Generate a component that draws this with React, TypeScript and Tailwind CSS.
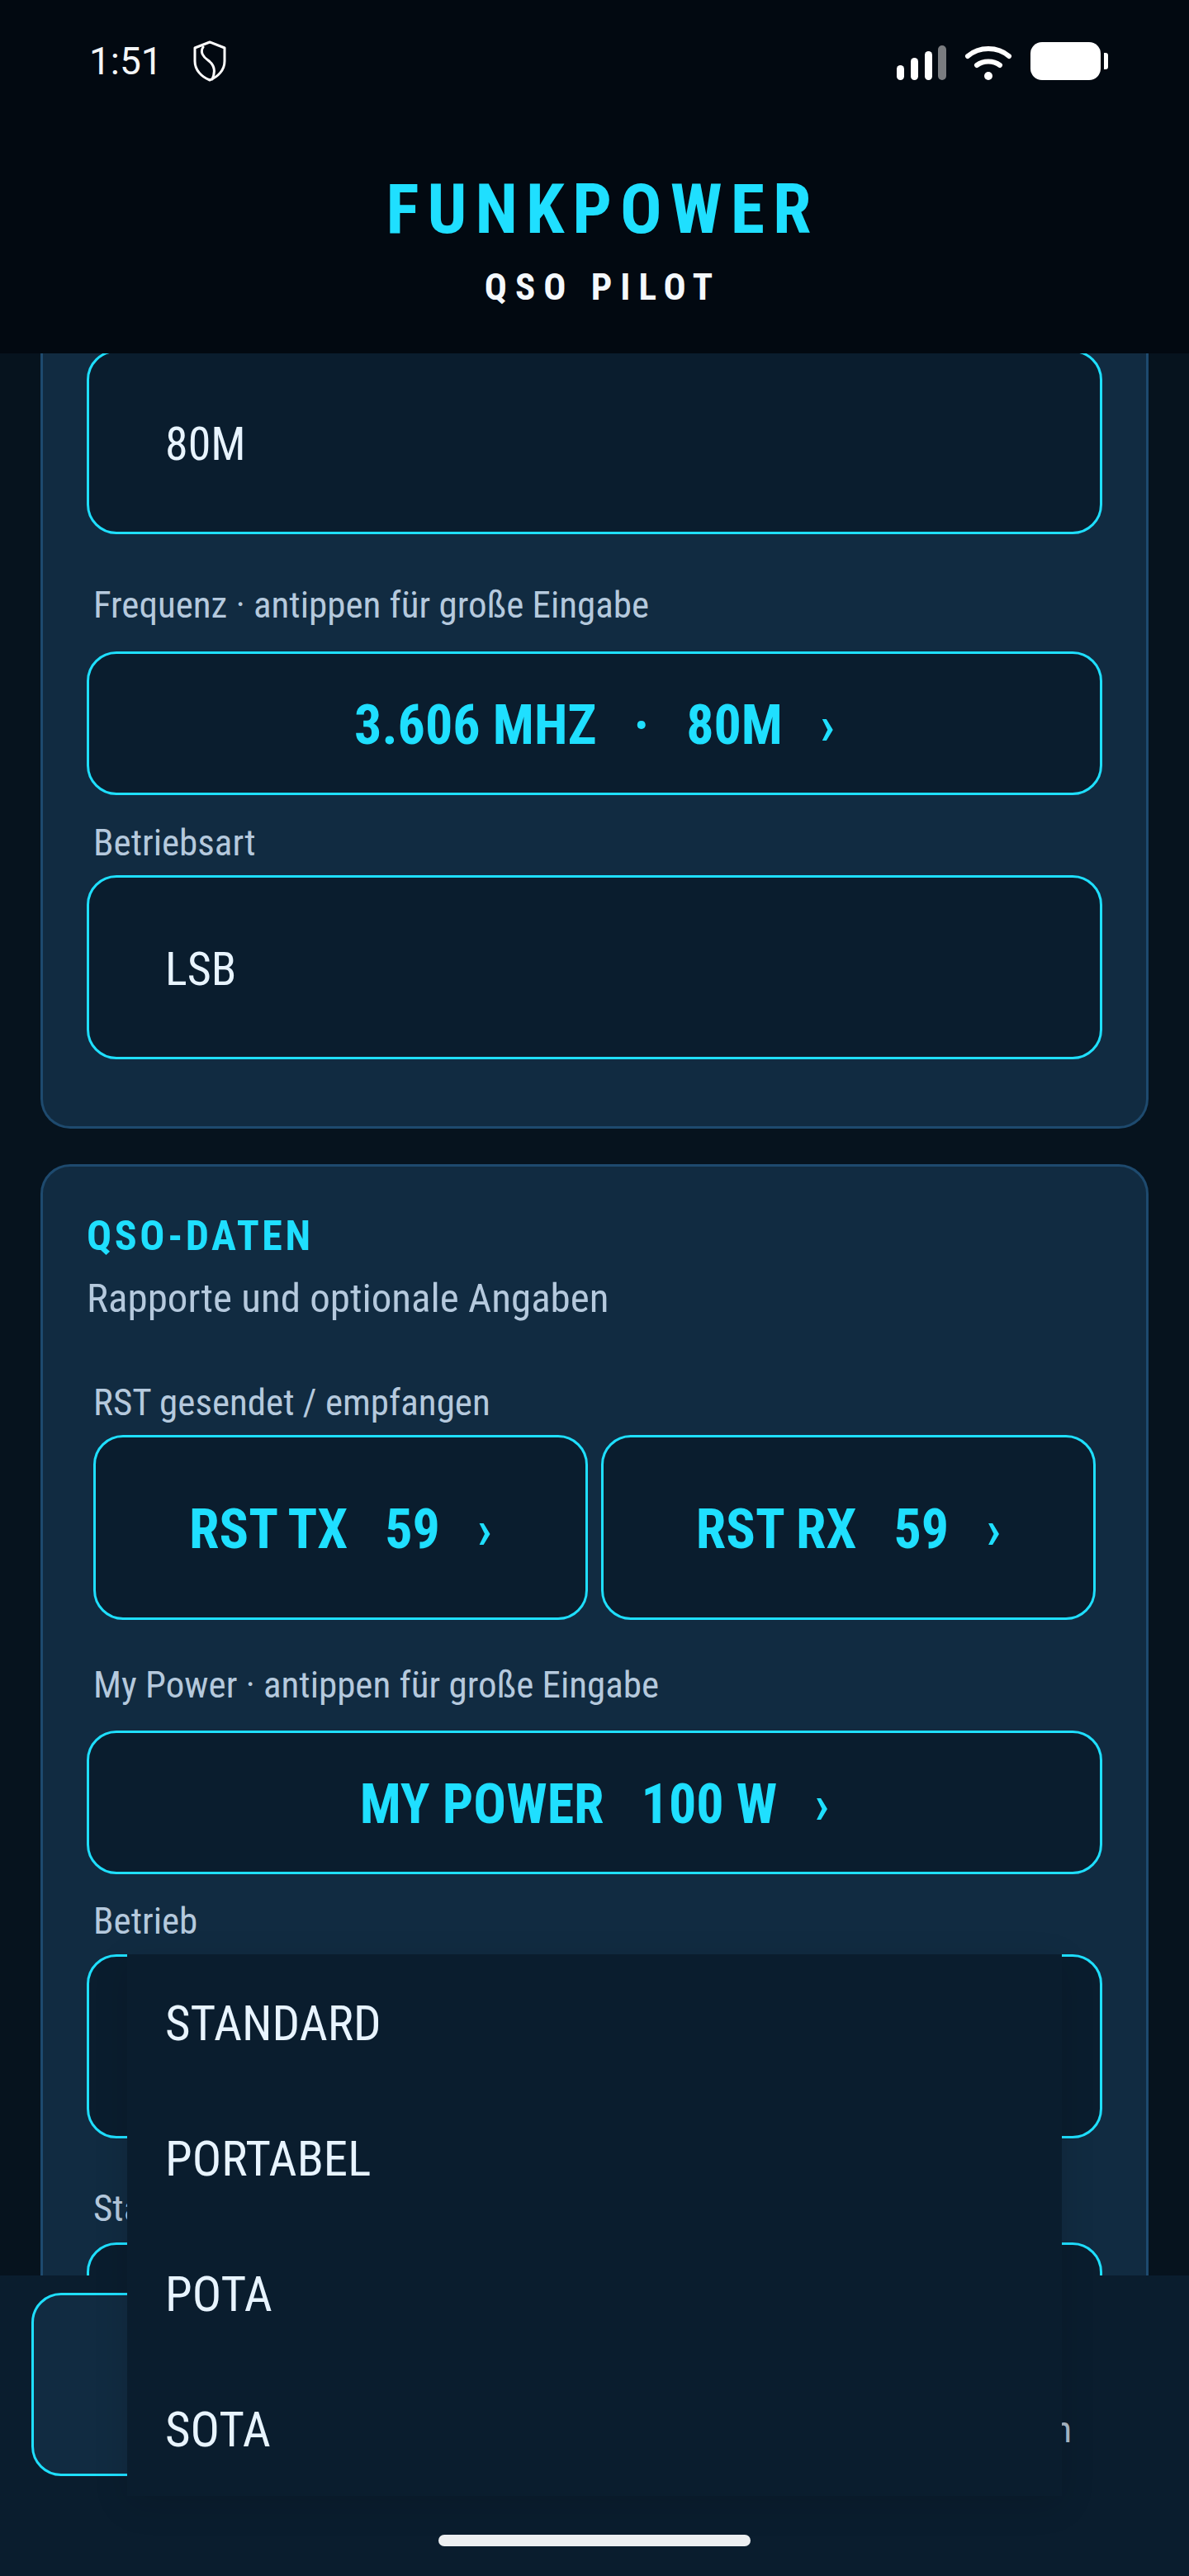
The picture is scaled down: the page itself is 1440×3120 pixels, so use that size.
function ShieldIcon() {
  return (
    <svg width="42" height="50" viewBox="0 0 42 50" fill="none" stroke="#fff" strokeWidth="3" aria-hidden="true">
      <path d="M21 2 L39 9 V25 C39 36 31 44 21 48 C11 44 3 36 3 25 V9 Z" strokeLinejoin="round" />
      <path d="M13 8 C9 14 13 20 19 24 C26 29 29 36 24 47" strokeLinecap="round" />
    </svg>
  )
}

function SignalIcon() {
  return (
    <svg width="60" height="42" viewBox="0 0 60 42" aria-hidden="true">
      <rect x="0" y="24" width="9" height="18" rx="4.5" fill="#fff" />
      <rect x="17" y="15" width="9" height="27" rx="4.5" fill="#fff" />
      <rect x="34" y="7" width="9" height="35" rx="4.5" fill="#fff" />
      <rect x="50" y="0" width="10" height="42" rx="5" fill="#7a7c80" />
    </svg>
  )
}

function WifiIcon() {
  return (
    <svg width="58" height="42" viewBox="0 0 58 42" fill="none" stroke="#fff" strokeWidth="6" strokeLinecap="round" aria-hidden="true">
      <path d="M4 13 C18 1 40 1 54 13" />
      <path d="M15 24 C23 18 35 18 43 24" />
      <circle cx="29" cy="37" r="5" fill="#fff" stroke="none" />
    </svg>
  )
}

function BatteryIcon() {
  return (
    <div className="flex items-center gap-[4px]">
      <div className="h-[46px] w-[85px] rounded-[14px] bg-white" />
      <div className="h-[20px] w-[5px] rounded-r-[3px] bg-white" />
    </div>
  )
}

function StatusBar() {
  return (
    <div className="flex h-[49px] items-center justify-between pl-[108px] pr-[98px]">
      <div className="flex items-center gap-[36px]">
        <span className="text-[46px] leading-none text-[#f4f6f8]">1:51</span>
        <ShieldIcon />
      </div>
      <div className="flex items-end gap-[22px]">
        <SignalIcon />
        <WifiIcon />
        <BatteryIcon />
      </div>
    </div>
  )
}

function FieldLabel({ text, className }: { text: string; className: string }) {
  return (
    <div className={`pl-[8px] text-[45px] leading-[60px] text-[#b5c9dd] font-stretch-condensed ${className}`}>
      {text}
    </div>
  )
}

function SelectBox({ value, className = '' }: { value?: string; className?: string }) {
  return (
    <div className={`flex h-[223px] items-center rounded-[36px] border-[3px] border-[#1fdfff] bg-[#0a1d2e] pl-[92px] pt-[4px] text-[56px] text-[#e8f4ff] font-stretch-condensed ${className}`}>
      {value}
    </div>
  )
}

function BigButton({ parts, className = '' }: { parts: string[]; className?: string }) {
  return (
    <div className={`flex items-center justify-center gap-[45px] rounded-[36px] border-[3px] border-[#1fdfff] bg-[#0a1d2e] pt-[4px] text-[66px] font-bold text-[#1fdfff] font-stretch-condensed ${className}`}>
      {parts.map((p) => (
        <span key={p}>{p}</span>
      ))}
      <span className="text-[66px] font-medium">›</span>
    </div>
  )
}

function DropdownMenu() {
  const items = ['STANDARD', 'PORTABEL', 'POTA', 'SOTA']
  return (
    <div className="absolute left-[154px] top-[2367px] w-[1132px] bg-[#0a1d2e] shadow-[0_10px_40px_rgba(0,0,0,0.12)]">
      {items.map((item) => (
        <div key={item} className="flex h-[164px] items-center pl-[46px] pt-[4px] text-[59px] text-[#e8f4ff] font-stretch-condensed">
          {item}
        </div>
      ))}
    </div>
  )
}

export default function App() {
  return (
    <div className="relative flex h-[3120px] w-[1440px] flex-col overflow-hidden bg-[#06131e] font-['Roboto',sans-serif]">
      <header className="h-[428px] shrink-0 bg-[#020911] pt-[49px] text-center">
        <StatusBar />
        <div className="mt-[106px] pl-[20px] text-[84px] font-bold leading-[100px] tracking-[10px] text-[#1fdfff] font-stretch-condensed">
          FUNKPOWER
        </div>
        <div className="mt-[14px] pl-[20px] text-[45px] font-bold leading-[60px] tracking-[10px] text-[#f4f8fc] font-stretch-condensed">
          QSO PILOT
        </div>
      </header>

      <main className="min-h-0 flex-1 overflow-hidden px-[49px]">
        {/* first card is scrolled up under the header */}
        <section className="-mt-[44px] rounded-b-[36px] border-[3px] border-t-0 border-[#1e4a6e] bg-[#112b41] px-[53px] pb-[81px] pt-[40px]">
          <SelectBox value="80M" />
          <FieldLabel text="Frequenz · antippen für große Eingabe" className="mb-[26px] mt-[56px]" />
          <BigButton parts={['3.606 MHZ', '·', '80M']} className="h-[174px]" />
          <FieldLabel text="Betriebsart" className="mb-[9px] mt-[28px]" />
          <SelectBox value="LSB" />
        </section>

        <section className="mt-[43px] rounded-[36px] border-[3px] border-[#1e4a6e] bg-[#112b41] px-[53px] pb-[40px] pt-[52px]">
          <div className="text-[50px] font-bold leading-[64px] tracking-[3.6px] text-[#1fdfff] font-stretch-condensed">
            QSO-DATEN
          </div>
          <div className="mt-[12px] text-[49px] leading-[64px] text-[#b5c9dd] font-stretch-condensed">
            Rapporte und optionale Angaben
          </div>
          <FieldLabel text="RST gesendet / empfangen" className="mb-[9px] mt-[64px]" />
          <div className="flex gap-[16px] px-[8px]">
            <BigButton parts={['RST TX', '59']} className="h-[224px] flex-1" />
            <BigButton parts={['RST RX', '59']} className="h-[224px] flex-1" />
          </div>
          <FieldLabel text="My Power · antippen für große Eingabe" className="mb-[25px] mt-[49px]" />
          <BigButton parts={['MY POWER', '100 W']} className="h-[174px]" />
          <FieldLabel text="Betrieb" className="mb-[10px] mt-[27px]" />
          <SelectBox />
          <FieldLabel text="Status" className="mb-[11px] mt-[55px]" />
          <SelectBox />
        </section>
      </main>

      <footer className="flex h-[364px] shrink-0 flex-col bg-[#0a1d2e] px-[38px] pt-[21px]">
        <div className="flex h-[222px] justify-between pr-[104px]">
          <div className="w-[640px] rounded-[36px] border-[3px] border-[#1fdfff] bg-[#112b41]" />
          <span className="self-end pb-[26px] text-[45px] leading-[60px] text-[#a9b9c9] font-stretch-condensed">
            Abbrechen
          </span>
        </div>
        <div className="mx-auto mt-[71px] h-[14px] w-[378px] rounded-full bg-[#eceff1]" />
      </footer>

      <DropdownMenu />
    </div>
  )
}
